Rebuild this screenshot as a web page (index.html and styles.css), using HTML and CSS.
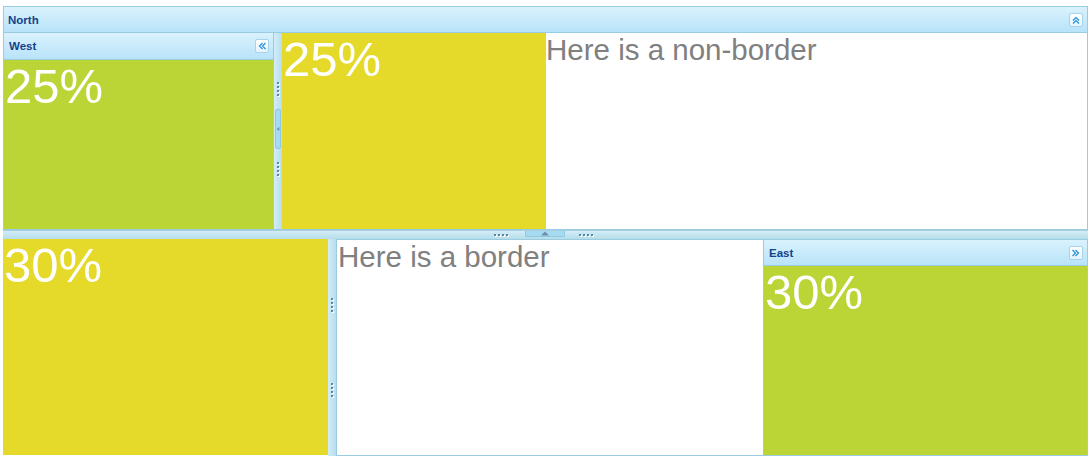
FILE: index.html
```html
<!DOCTYPE html>
<html>
<head>
<meta charset="utf-8">
<link rel="stylesheet" href="styles.css">
</head>
<body>
<div class="viewport">
  <div class="north">
    <div class="hdr north-hdr">
      <span class="title">North</span>
      <span class="tool">
        <svg width="14" height="14" viewBox="0 0 14 14"><path d="M4 7.5 L7 4.5 L10 7.5 M4 10.5 L7 7.5 L10 10.5" fill="none" stroke="#1f8fd8" stroke-width="1.2"/></svg>
      </span>
    </div>
    <div class="north-body">
      <div class="west">
        <div class="hdr west-hdr">
          <span class="title">West</span>
          <span class="tool">
            <svg width="14" height="14" viewBox="0 0 14 14"><path d="M7.5 4 L4.5 7 L7.5 10 M10.5 4 L7.5 7 L10.5 10" fill="none" stroke="#1f8fd8" stroke-width="1.2"/></svg>
          </span>
        </div>
        <div class="fill green big">25%</div>
      </div>
      <div class="vsplit">
        <div class="dots v"><i></i><i></i><i></i><i></i></div>
        <div class="mini-v"><svg width="6" height="10" viewBox="0 0 6 10"><path d="M5 2 L1 5 L5 8 Z" fill="#6f8fa6"/></svg></div>
        <div class="dots v"><i></i><i></i><i></i><i></i></div>
      </div>
      <div class="fill yellow big ycol">25%</div>
      <div class="plain mid">Here is a non-border</div>
    </div>
  </div>
  <div class="hsplit">
    <div class="dots h"><i></i><i></i><i></i><i></i></div>
    <div class="mini-h"><svg width="10" height="6" viewBox="0 0 10 6"><path d="M1 5.5 L5 1.5 L9 5.5 Z" fill="#6f8fa6"/></svg></div>
    <div class="dots h"><i></i><i></i><i></i><i></i></div>
  </div>
  <div class="south">
    <div class="fill yellow big scol">30%</div>
    <div class="vsplit2">
      <div class="dots v"><i></i><i></i><i></i><i></i></div>
      <div class="dots v"><i></i><i></i><i></i><i></i></div>
    </div>
    <div class="bordered mid">Here is a border</div>
    <div class="east">
      <div class="hdr east-hdr">
        <span class="title">East</span>
        <span class="tool">
          <svg width="14" height="14" viewBox="0 0 14 14"><path d="M3.5 4 L6.5 7 L3.5 10 M6.5 4 L9.5 7 L6.5 10" fill="none" stroke="#1f8fd8" stroke-width="1.2"/></svg>
        </span>
      </div>
      <div class="fill green big">30%</div>
    </div>
  </div>
</div>
</body>
</html>
```

FILE: styles.css
```css
html, body {
  margin: 0;
  padding: 0;
  background: #ffffff;
}
body {
  font-family: "Liberation Sans", Arial, sans-serif;
}
.viewport {
  margin: 6px 0 0 3px;
  width: 1085px;
  height: 450px;
  display: flex;
  flex-direction: column;
}
.hdr {
  box-sizing: border-box;
  height: 27px;
  background: linear-gradient(#daf2fd, #b8e3f9);
  border-bottom: 1px solid #99cce0;
  display: flex;
  align-items: center;
  justify-content: space-between;
  padding: 0 4px 0 5px;
}
.title {
  font-weight: bold;
  font-size: 11.5px;
  color: #15428b;
}
.tool {
  width: 14px;
  height: 14px;
  box-sizing: border-box;
  border: 1px solid #a9d3ea;
  border-radius: 2px;
  background: linear-gradient(#ffffff, #e3f3fc);
  display: flex;
}
.tool svg { margin: -1px; }
.north {
  box-sizing: border-box;
  height: 224px;
  border: 1px solid #99cce0;
  display: flex;
  flex-direction: column;
}
.north-hdr {
  height: 26px;
}
.north-hdr .title { margin-left: -1px; }
.north-body {
  flex: 1;
  display: flex;
  min-height: 0;
}
.west {
  width: 270px;
  box-sizing: border-box;
  border-right: 1px solid #99cce0;
  display: flex;
  flex-direction: column;
}
.west-hdr { height: 27px; }
.fill {
  box-sizing: border-box;
  flex: 1;
  color: #ffffff;
}
.green { background: #bad535; }
.yellow { background: #e5d92a; }
.big {
  font-size: 49px;
  line-height: 52px;
  padding-left: 1px;
}
.mid {
  font-size: 29.5px;
  line-height: 34px;
  color: #808080;
}
.ycol {
  flex: 0 0 264px;
}
.plain {
  flex: 1;
  background: #ffffff;
}
.vsplit {
  width: 8px;
  background: linear-gradient(90deg, #d3edf7, #b7deee);
  display: flex;
  flex-direction: column;
  align-items: center;
  padding-top: 49px;
  gap: 13px;
}
.vsplit .mini-v {
  width: 6px;
  height: 40px;
  box-sizing: border-box;
  border: 1px solid #8fc8e0;
  border-radius: 2px;
  background: #a6daf0;
  display: flex;
  align-items: center;
  justify-content: center;
  margin-left: -1px;
}
.dots {
  display: flex;
  gap: 2px;
}
.dots.v { flex-direction: column; }
.dots i {
  display: block;
  width: 2px;
  height: 2px;
  background: #5b87a5;
  box-shadow: 1px 1px 0 #ffffff;
}
.hsplit {
  height: 9px;
  background: linear-gradient(#d3edf7, #b5dde9);
  border-top: 1px solid #a7d0df;
  box-sizing: border-box;
  display: flex;
  justify-content: center;
  align-items: flex-start;
  padding-right: 4px;
}
.hsplit .dots.h {
  margin-top: 3px;
}
.hsplit .dots.h:first-child { margin-right: 17px; }
.hsplit .dots.h:last-child { margin-left: 14px; }
.mini-h {
  width: 40px;
  height: 6px;
  box-sizing: border-box;
  border: 1px solid #8fc8e0;
  border-top: none;
  border-radius: 0 0 2px 2px;
  background: #a6daf0;
  display: flex;
  justify-content: center;
  align-items: flex-end;
}
.south {
  flex: 1;
  display: flex;
  min-height: 0;
}
.scol {
  flex: 0 0 325px;
  margin-bottom: 1px;
}
.vsplit2 {
  width: 8px;
  flex: 0 0 8px;
  background: linear-gradient(90deg, #d3edf7, #b7deee);
  display: flex;
  flex-direction: column;
  align-items: center;
  padding-top: 59px;
  gap: 71px;
}
.bordered {
  box-sizing: border-box;
  flex: 0 0 427px;
  border: 1px solid #99cce0;
  border-right: none;
  background: #fff;
  padding-left: 1px;
}
.east {
  flex: 1;
  box-sizing: border-box;
  border: 1px solid #99cce0;
  display: flex;
  flex-direction: column;
}
.east-hdr { height: 26px; }
```
